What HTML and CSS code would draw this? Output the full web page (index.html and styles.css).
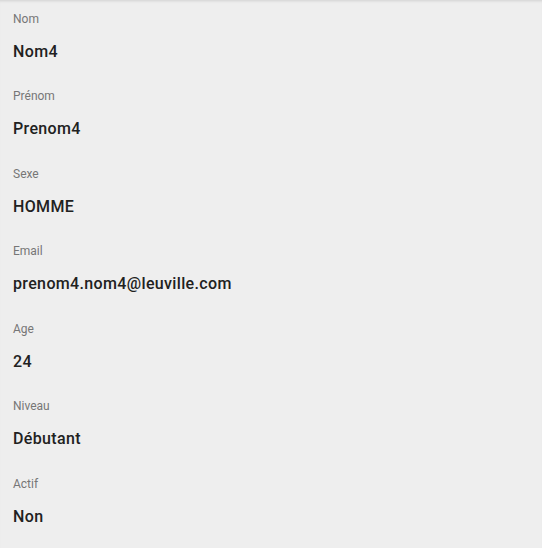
FILE: index.html
```html
<!DOCTYPE html>
<html lang="fr">
<head>
<meta charset="utf-8">
<link rel="stylesheet" href="styles.css">
</head>
<body>
<div class="detail">
  <div class="field"><div class="label">Nom</div><div class="value">Nom4</div></div>
  <div class="field"><div class="label">Prénom</div><div class="value">Prenom4</div></div>
  <div class="field"><div class="label">Sexe</div><div class="value">HOMME</div></div>
  <div class="field"><div class="label">Email</div><div class="value">prenom4.nom4@leuville.com</div></div>
  <div class="field"><div class="label">Age</div><div class="value">24</div></div>
  <div class="field"><div class="label">Niveau</div><div class="value">Débutant</div></div>
  <div class="field"><div class="label">Actif</div><div class="value">Non</div></div>
</div>
</body>
</html>
```
FILE: styles.css
```css
html, body {
  margin: 0;
  padding: 0;
  background: #eeeeee;
  font-family: Roboto, "Noto Sans", sans-serif;
}
.detail {
  min-height: 548px;
  box-sizing: border-box;
  padding: 10.5px 13px 0;
  box-shadow: inset 0 3px 3px -2px rgba(0, 0, 0, 0.12);
}
.field {
  display: flex;
  flex-direction: column;
  margin-bottom: 24.5px;
}
.label {
  font-size: 12px;
  line-height: 16px;
  color: #767676;
}
.value {
  margin-top: 13px;
  font-size: 16px;
  line-height: 24px;
  font-weight: 500;
  letter-spacing: 0.35px;
  color: #212121;
}
```
